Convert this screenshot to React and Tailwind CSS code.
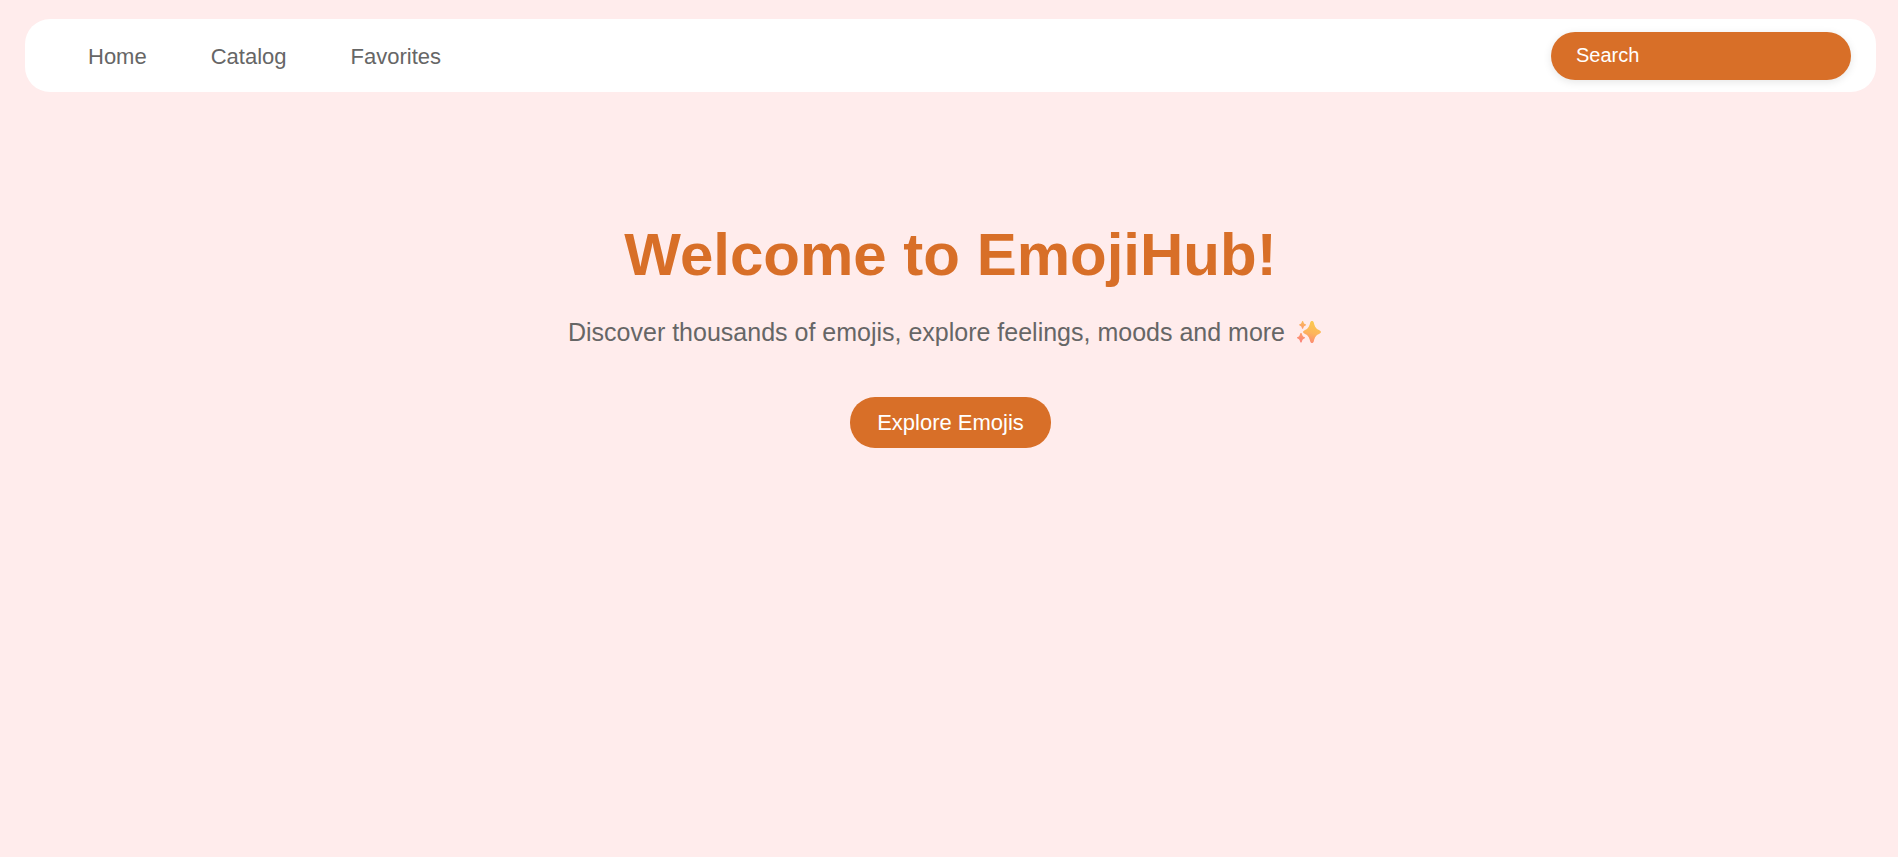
import React, { useState } from 'react';

const links = ['Home', 'Catalog', 'Favorites'];

function Sparkles({ className }) {
  return (
    <svg viewBox="0 0 24 22" className={className} role="img" aria-label="sparkles">
      <defs>
        <linearGradient id="sparkle-large" gradientUnits="userSpaceOnUse" x1="17" y1="2" x2="11" y2="22">
          <stop offset="0" stopColor="#fbc750" />
          <stop offset="0.5" stopColor="#fdb55c" />
          <stop offset="1" stopColor="#fc8674" />
        </linearGradient>
        <linearGradient id="sparkle-top" gradientUnits="userSpaceOnUse" x1="6" y1="0" x2="5" y2="8">
          <stop offset="0" stopColor="#fbbd5a" />
          <stop offset="1" stopColor="#fc9a6c" />
        </linearGradient>
        <linearGradient id="sparkle-bottom" gradientUnits="userSpaceOnUse" x1="5" y1="12" x2="3" y2="22">
          <stop offset="0" stopColor="#fda06a" />
          <stop offset="1" stopColor="#fc7f7c" />
        </linearGradient>
      </defs>
      <path
        fill="url(#sparkle-large)"
        d="M15 0C15.9 0 16.5 .5 16.9 2C17.9 6 19 7.8 22.8 9.5C24.4 10.2 24.4 11.8 22.8 12.5C19 14.2 17.9 16 16.9 20C16.5 21.5 15.9 22 15 22C14.1 22 13.5 21.5 13.1 20C12.1 16 11 14.2 7.2 12.5C5.6 11.8 5.6 10.2 7.2 9.5C11 7.8 12.1 6 13.1 2C13.5 .5 14.1 0 15 0Z"
      />
      <path
        fill="url(#sparkle-top)"
        d="M5.6 0C6.1 0 6.2 .3 6.4 1C6.8 2.3 7.2 2.8 8.6 3.3C9.3 3.6 9.3 4.1 8.6 4.4C7.2 4.9 6.8 5.4 6.4 6.7C6.2 7.4 6.1 7.7 5.6 7.7C5.1 7.7 5 7.4 4.8 6.7C4.4 5.4 4 4.9 2.6 4.4C1.9 4.1 1.9 3.6 2.6 3.3C4 2.8 4.4 2.3 4.8 1C5 .3 5.1 0 5.6 0Z"
      />
      <path
        fill="url(#sparkle-bottom)"
        d="M4 12C4.6 12 4.8 12.4 5 13.2C5.4 14.8 5.9 15.5 7.4 16.1C8.2 16.4 8.2 17.1 7.4 17.4C5.9 18 5.4 18.7 5 20.3C4.8 21.1 4.6 21.5 4 21.5C3.4 21.5 3.2 21.1 3 20.3C2.6 18.7 2.1 18 .6 17.4C-.2 17.1 -.2 16.4 .6 16.1C2.1 15.5 2.6 14.8 3 13.2C3.2 12.4 3.4 12 4 12Z"
      />
    </svg>
  );
}

export default function App() {
  const [query, setQuery] = useState('');

  return (
    <div className="min-h-screen bg-[#ffecec] pt-[19px] pl-[25px] pr-[22px] font-['Liberation_Sans',Arial,sans-serif] text-[#666666]">
      {/* NAVBAR */}
      <nav className="flex items-center justify-between rounded-[25px] bg-white pt-[13px] pb-3 pl-[63px] pr-[25px]">
        <ul className="flex items-center gap-16 text-[22px]">
          {links.map((label) => (
            <li key={label}>
              <a href={`#${label.toLowerCase()}`} className="hover:text-[#d86f28]">
                {label}
              </a>
            </li>
          ))}
        </ul>
        <input
          type="search"
          aria-label="Search"
          placeholder="Search"
          value={query}
          onChange={(e) => setQuery(e.target.value)}
          className="h-12 w-[300px] rounded-[25px] bg-[#d86f28] px-[25px] pb-0.5 text-xl text-white shadow-[0_2px_8px_rgba(0,0,0,0.1)] placeholder:text-white focus:outline-none"
        />
      </nav>

      {/* HERO */}
      <main className="flex flex-col items-center px-4 pt-[133px] text-center">
        <h1 className="text-6xl font-bold text-[#d86f28]">Welcome to EmojiHub!</h1>
        <p className="mt-[29px] text-[25px] leading-9">
          Discover thousands of emojis, explore feelings, moods and more
          <Sparkles className="ml-3 mr-3 inline-block h-[22px] w-6 align-[-2px]" />
        </p>
        <button
          type="button"
          className="mt-[47px] cursor-pointer rounded-[25px] bg-[#d86f28] px-[27px] py-2 text-[22px] leading-[35px] text-white"
        >
          Explore Emojis
        </button>
      </main>
    </div>
  );
}
